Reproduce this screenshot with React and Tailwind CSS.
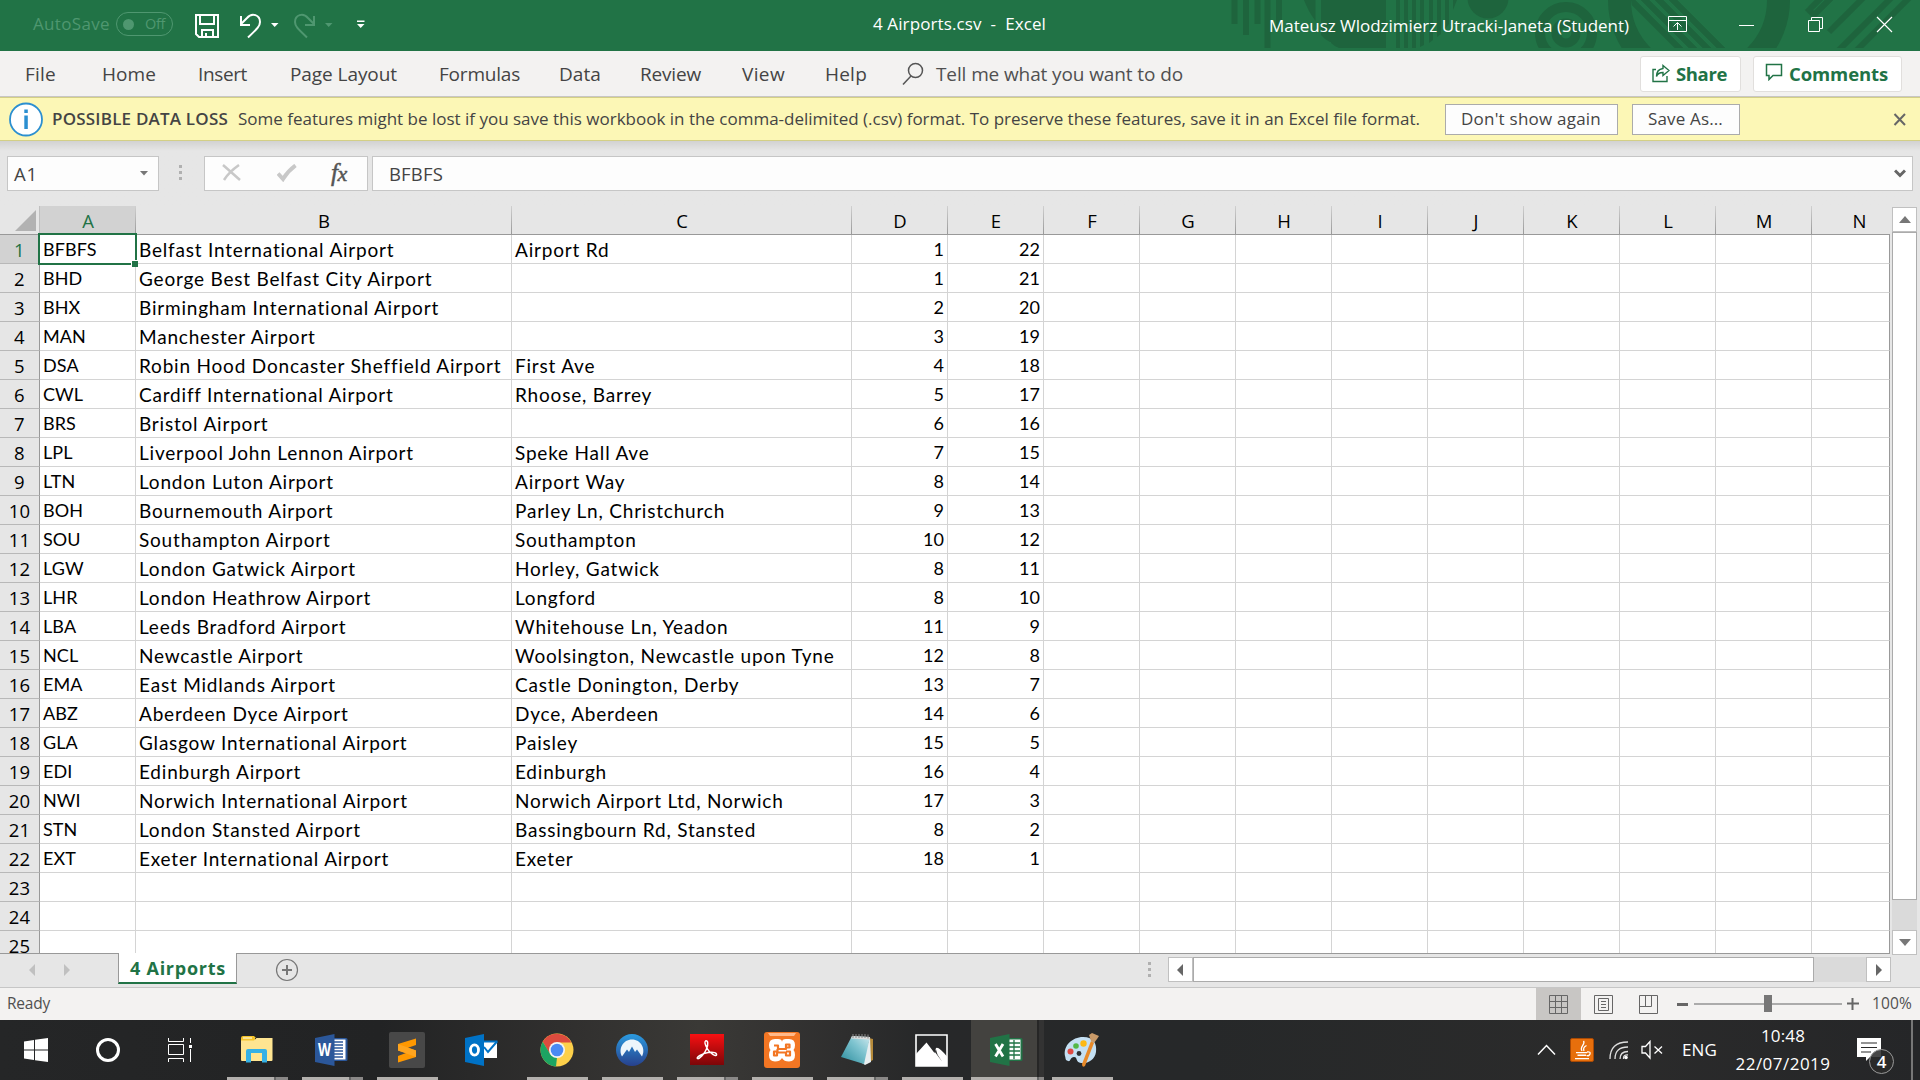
import React, { useLayoutEffect, useRef } from "react";

const UI = "font-['Open_Sans','Noto_Sans',sans-serif]";
const CELL = "font-['Lato','Open_Sans',sans-serif]";

/* Text tracked so that it fills exactly `w` pixels. */
function Fit({ w, className = "", children }) {
  const ref = useRef(null);
  useLayoutEffect(() => {
    const el = ref.current;
    el.style.letterSpacing = "0px";
    const natural = el.getBoundingClientRect().width;
    el.style.letterSpacing = `${(w - natural) / el.textContent.length}px`;
  }, [w]);
  return (
    <span className={`block shrink-0 whitespace-pre ${className}`} style={{ width: w }}>
      <span ref={ref} className="inline-block">{children}</span>
    </span>
  );
}

const ROWS = [
  ["BFBFS", "Belfast International Airport", "Airport Rd", 1, 22],
  ["BHD", "George Best Belfast City Airport", "", 1, 21],
  ["BHX", "Birmingham International Airport", "", 2, 20],
  ["MAN", "Manchester Airport", "", 3, 19],
  ["DSA", "Robin Hood Doncaster Sheffield Airport", "First Ave", 4, 18],
  ["CWL", "Cardiff International Airport", "Rhoose, Barrey", 5, 17],
  ["BRS", "Bristol Airport", "", 6, 16],
  ["LPL", "Liverpool John Lennon Airport", "Speke Hall Ave", 7, 15],
  ["LTN", "London Luton Airport", "Airport Way", 8, 14],
  ["BOH", "Bournemouth Airport", "Parley Ln, Christchurch", 9, 13],
  ["SOU", "Southampton Airport", "Southampton", 10, 12],
  ["LGW", "London Gatwick Airport", "Horley, Gatwick", 8, 11],
  ["LHR", "London Heathrow Airport", "Longford", 8, 10],
  ["LBA", "Leeds Bradford Airport", "Whitehouse Ln, Yeadon", 11, 9],
  ["NCL", "Newcastle Airport", "Woolsington, Newcastle upon Tyne", 12, 8],
  ["EMA", "East Midlands Airport", "Castle Donington, Derby", 13, 7],
  ["ABZ", "Aberdeen Dyce Airport", "Dyce, Aberdeen", 14, 6],
  ["GLA", "Glasgow International Airport", "Paisley", 15, 5],
  ["EDI", "Edinburgh Airport", "Edinburgh", 16, 4],
  ["NWI", "Norwich International Airport", "Norwich Airport Ltd, Norwich", 17, 3],
  ["STN", "London Stansted Airport", "Bassingbourn Rd, Stansted", 8, 2],
  ["EXT", "Exeter International Airport", "Exeter", 18, 1],
  [], [], [],
];

const COLS = "ABCDEFGHIJKLMN".split("");
const GRID = "grid grid-cols-[40px_96px_376px_340px_repeat(10,96px)_78px]";

function cellText(j) {
  if (j === 0) return "pl-[3px] tracking-[0.1px]";
  if (j < 3) return "pl-[3px] text-[19px] tracking-[0.8px]";
  return "pr-[3px] text-right";
}

function TitlePattern() {
  return (
    <svg className="absolute left-[1220px] top-0" width="700" height="48" viewBox="0 0 700 48">
      <defs>
        <clipPath id="ringInner"><path d="M380 0H411A68 68 0 0 0 440 48H560V0Z" /></clipPath>
      </defs>
      <g fill="#1e643d">
        <path d="M11.500 0h6v24h-6zM23 0h6v35h-6zM34.500 0h6v24h-6zM44.500 0h6v48h-6zM56 0h6v28h-6z" />
        <path d="M84 0h11.500v21Q88 11 84 0zM101 0h10v42h-1q-6-3-9-7z" />
        <path d="M111 0h55v48h-47q-5-2-8-5z" />
        <path d="M176 0h4v48h-4zM184 0h4v48h-4zM192 0h4v48h-4zM200 0h4v45l-4 2zM209 0h4v40l-4 3zM217 0h4v34l-4 3zM225 0h4v24l-4 5zM233 0h4l-4 10z" />
        <circle cx="268" cy="-2" r="20.500" />
      </g>
      <g fill="none" stroke="#1e643d">
        <circle cx="346" cy="33" r="26" strokeWidth="10" />
        <circle cx="346" cy="33" r="10" strokeWidth="9" />
        <circle cx="479" cy="0" r="79.500" strokeWidth="23" />
        <g clipPath="url(#ringInner)" strokeWidth="6">
          <path d="M397-14 465 54M411-14 479 54M425-14 493 54M439-14 507 54" />
        </g>
        <path d="M590 9 602-3M587 8 594 15 617-8M609 32 645-4M615 54 673-4M633 54 691-4" strokeWidth="6" />
      </g>
    </svg>
  );
}

function TitleBar() {
  return (
    <header className="relative flex h-[51px] shrink-0 items-start bg-[#217346] text-white">
      <TitlePattern />
      <div className="relative flex w-full items-start">
        <Fit w={77} className="ml-[33px] mt-[12px] text-[17px] leading-[24px] text-[#4f9770]">AutoSave</Fit>
        <div className="ml-[6px] mt-[12px] flex h-[24px] w-[57px] items-center rounded-full border border-[#4f9770] pl-[6px] text-[#4f9770]">
          <span className="h-[11px] w-[11px] rounded-full bg-[#4f9770]" />
          <Fit w={20} className="ml-[11px] text-[14.500px] leading-[20px]">Off</Fit>
        </div>
        <svg className="ml-[21px] mt-[13px]" width="26" height="26" viewBox="0 0 26 26" fill="none" stroke="#fff" strokeWidth="2">
          <path d="M2 2H24V24H5L2 21ZM6 2V11H20V2M8 24V17H19V24M12 20V24" />
        </svg>
        <svg className="ml-[18px] mt-[13px]" width="42" height="26" viewBox="0 0 42 26" fill="none">
          <path d="M3 3V12H12M3 11 9 5C14-1 22 2 22 9C22 13 20 15 10 24.500" stroke="#fff" strokeWidth="2" />
          <path d="M33 10H40.500L36.700 14Z" fill="#fff" />
        </svg>
        <svg className="ml-[12px] mt-[13px]" width="42" height="26" viewBox="0 0 42 26" fill="none">
          <path d="M22 3V12H13M22 11 16 5C11-1 3 2 3 9C3 13 5 15 15 24.500" stroke="#4f9770" strokeWidth="2" />
          <path d="M33 10H40.500L36.700 14Z" fill="#4f9770" />
        </svg>
        <svg className="ml-[22px] mt-[20px]" width="10" height="9" viewBox="0 0 10 9" fill="#fff">
          <path d="M1 .5H8.500V2H1ZM1 4H8.500L4.700 8Z" />
        </svg>
        <Fit w={173} className="ml-[507px] mt-[12px] text-[17px] leading-[24px]">{"4 Airports.csv  -  Excel"}</Fit>
        <Fit w={360} className="ml-[223px] mt-[14px] text-[17px] leading-[24px]">Mateusz Wlodzimierz Utracki-Janeta (Student)</Fit>
        <svg className="ml-[39px] mt-[16px]" width="20" height="17" viewBox="0 0 20 17" fill="none" stroke="#fff">
          <path d="M.5.5H18.500V15.500H.5ZM.5 4.500H18.500M9.500 14V7M5.500 10.500 9.500 6.500 13.500 10.500" />
        </svg>
        <svg className="ml-[51px] mt-[25px]" width="16" height="1"><path d="M0 .5H15" stroke="#fff" /></svg>
        <svg className="ml-[52px] mt-[16px]" width="17" height="17" viewBox="0 0 17 17" fill="none" stroke="#fff">
          <path d="M1.500 4.500H12.500V15.500H1.500ZM4.500 4V1.500H15.500V12.500H13" />
        </svg>
        <svg className="ml-[52px] mt-[16px]" width="17" height="17" viewBox="0 0 17 17" fill="none" stroke="#fff" strokeWidth="1.200">
          <path d="M1 1 16 16M16 1 1 16" />
        </svg>
      </div>
    </header>
  );
}

const MENU = [
  ["File", 31, "ml-[25px]"],
  ["Home", 54, "ml-[46px]"],
  ["Insert", 49, "ml-[42px]"],
  ["Page Layout", 107, "ml-[43px]"],
  ["Formulas", 81, "ml-[42px]"],
  ["Data", 42, "ml-[39px]"],
  ["Review", 61, "ml-[39px]"],
  ["View", 43, "ml-[41px]"],
  ["Help", 42, "ml-[40px]"],
];

function MenuBar() {
  return (
    <nav className="flex h-[46px] shrink-0 items-center border-b border-[#c8c6c4] bg-[#f3f2f1] text-[19px] leading-[26px] text-[#444]">
      {MENU.map(([t, w, m]) => <Fit key={t} w={w} className={m}>{t}</Fit>)}
      <svg className="ml-[35px]" width="22" height="24" viewBox="0 0 22 24" fill="none" stroke="#555" strokeWidth="1.500">
        <circle cx="13.500" cy="8.500" r="7" /><path d="M9 14 1 22.500" />
      </svg>
      <Fit w={247} className="ml-[12px] text-[#505050]">Tell me what you want to do</Fit>
      <div className="ml-auto mr-[18px] flex gap-[12px] font-bold text-[#217346]">
        <button className="flex h-[36px] w-[101px] items-center rounded-[3px] border border-[#e1dfdd] bg-white pl-[11px]">
          <svg width="18" height="19" viewBox="0 0 18 19" fill="none" stroke="#217346" strokeWidth="1.400">
            <path d="M4 5.500H1V17.500H15V12M11 1.500 17 6.500 11 11.500V8.500C8 8.500 5.500 9.500 4.500 12.500C4.500 8 7 5 11 4.500Z" />
          </svg>
          <Fit w={51} className="ml-[6px] text-[18.500px]">Share</Fit>
        </button>
        <button className="flex h-[36px] w-[149px] items-center rounded-[3px] border border-[#e1dfdd] bg-white pl-[11px]">
          <svg className="-mt-[3px]" width="18" height="18" viewBox="0 0 18 18" fill="none" stroke="#217346" strokeWidth="1.500">
            <path d="M1.500 1.500H16.500V12.500H8L4 16.500V12.500H1.500Z" />
          </svg>
          <Fit w={99} className="ml-[6px] text-[18.500px]">Comments</Fit>
        </button>
      </div>
    </nav>
  );
}

function MessageBar() {
  return (
    <div className="flex h-[44px] shrink-0 items-center border-b border-t border-[#d3cf86] bg-[#fcf7b6] text-[17px] leading-[24px] text-[#444]">
      <svg className="ml-[9px]" width="35" height="35" viewBox="0 0 35 35">
        <circle cx="17" cy="17.500" r="16" fill="#fff" stroke="#2b8fd0" strokeWidth="1.800" />
        <path d="M15.300 7.500h3.500v3.500h-3.500zM15.300 13.500h3.500v13.500h-3.500z" fill="#2b8fd0" />
      </svg>
      <Fit w={176} className="ml-[8px] font-semibold">POSSIBLE DATA LOSS</Fit>
      <Fit w={1182} className="ml-[10px]">Some features might be lost if you save this workbook in the comma-delimited (.csv) format. To preserve these features, save it in an Excel file format.</Fit>
      <button className="ml-[25px] flex h-[31px] w-[173px] items-center border border-[#ababab] bg-[#fdfdfd] pl-[15px]">
        <Fit w={140}>Don't show again</Fit>
      </button>
      <button className="ml-[14px] flex h-[31px] w-[108px] items-center border border-[#ababab] bg-[#fdfdfd] pl-[15px]">
        <Fit w={75}>Save As...</Fit>
      </button>
      <svg className="ml-auto mr-[13px]" width="14" height="13" viewBox="0 0 14 13"><path d="M1.500 1 12 12M12 1 1.500 12" stroke="#666" strokeWidth="2" /></svg>
    </div>
  );
}

function FormulaBar() {
  return (
    <div className="flex h-[65px] shrink-0 items-start bg-gradient-to-b from-[#d2d2d2] to-[#e6e6e6] to-[10px] pt-[15px] text-[18.500px] leading-[33px] text-[#444]">
      <div className="ml-[7px] flex h-[35px] w-[152px] items-center justify-between border border-[#c6c6c6] bg-[#fdfdfd] pl-[6px] pr-[10px]">
        <Fit w={24}>A1</Fit>
        <svg width="8" height="5"><path d="M0 0H8L4 4.500Z" fill="#777" /></svg>
      </div>
      <svg className="ml-[20px] mt-[9px]" width="3" height="17" fill="#b0b0b0"><path d="M0 0h3v3H0zM0 6h3v3H0zM0 12h3v3H0z" /></svg>
      <div className="ml-[22px] flex h-[35px] w-[164px] items-center border border-[#c6c6c6] bg-[#fdfdfd]">
        <svg className="ml-[17px] -mt-[2px]" width="19" height="17" viewBox="0 0 19 17"><path d="M1 1Q9 8 18 16M17 1Q7 8 2 16" fill="none" stroke="#c8c8c8" strokeWidth="2.500" /></svg>
        <svg className="ml-[36px] -mt-[1px]" width="20" height="18" viewBox="0 0 20 18"><path d="M1 9.500 6 15Q11 7 18.500 1.500" fill="none" stroke="#c8c8c8" strokeWidth="4" /></svg>
        <span className="ml-[34px] font-['Liberation_Serif',serif] text-[25px] italic leading-[30px] tracking-[-0.5px] text-[#555] [-webkit-text-stroke:0.500px_#555]">f<span className="text-[22px]">x</span></span>
      </div>
      <div className="ml-[4px] flex h-[35px] w-[1541px] items-center justify-between border border-[#c6c6c6] bg-[#fdfdfd] pl-[16px] pr-[6px]">
        <Fit w={54}>BFBFS</Fit>
        <svg width="12" height="9" viewBox="0 0 12 9"><path d="M1 1.500 6 6.500 11 1.500" fill="none" stroke="#666" strokeWidth="3" /></svg>
      </div>
    </div>
  );
}

function Sheet() {
  return (
    <div className="flex h-[748px] shrink-0 bg-[#e6e6e6]">
      <div className="h-[748px] w-[1890px] overflow-hidden border-b border-[#999]">
        <div className={`${GRID} h-[29px] border-b border-[#999] text-[18.500px] leading-[30px] text-black`}>
          <div className="flex items-end justify-end border-r border-[#c0c0c0] pb-[3px] pr-[3px]">
            <svg width="21" height="21"><path d="M21 0V21H0Z" fill="#b2b2b2" /></svg>
          </div>
          {COLS.map((c) => (
            <div key={c} className={`relative h-[28px] text-center ${c === "A" ? "bg-[#d2d2d2] text-[#217346]" : ""} ${c === "N" ? "pl-[17px]" : ""}`}>
              {c}
              {c !== "N" && <span className="absolute right-0 top-0 h-full w-px bg-gradient-to-b from-[#d0d0d0] to-[#999]" />}
            </div>
          ))}
        </div>
        <div className="relative">
          {ROWS.map((r, i) => (
            <div key={i} className={`${GRID} h-[29px] bg-white text-[18px] leading-[29px] text-black ${CELL}`}>
              <div className={`${UI} h-[29px] border-b border-r border-b-[#b8b8b8] border-r-[#999] text-center text-[18.500px] leading-[29px] tracking-[0.2px] ${i === 0 ? "bg-[#d2d2d2] text-[#217346]" : "bg-[#e6e6e6]"}`}>
                {i + 1}
              </div>
              {COLS.map((c, j) => (
                <div
                  key={c}
                  className={`h-[29px] overflow-hidden whitespace-nowrap border-b border-[#d4d4d4] ${c === "N" ? "border-r border-r-[#999]" : "border-r"} ${cellText(j)}`}
                >
                  {j < 5 ? r[j] : null}
                </div>
              ))}
            </div>
          ))}
          <div className="absolute left-[38px] top-[-2px] h-[32px] w-[99px] border-2 border-[#217346]">
            <span className="absolute bottom-[-4px] right-[-3px] h-[7px] w-[7px] border-l border-t border-white bg-[#217346]" />
          </div>
        </div>
      </div>
      <div className="relative ml-[2px] mt-px flex h-[748px] w-[25px] flex-col bg-[#dadada]">
        <div className="flex h-[25px] items-center justify-center border border-[#c0c0c0] bg-white"><svg width="12" height="7"><path d="M6 0 12 7H0Z" fill="#777" /></svg></div>
        <div className="h-[668px] border border-[#ababab] bg-white" />
        <div className="mt-auto flex h-[25px] items-center justify-center border border-[#c0c0c0] bg-white"><svg width="12" height="7"><path d="M0 0H12L6 7Z" fill="#777" /></svg></div>
      </div>
    </div>
  );
}

function TabBar() {
  return (
    <div className="flex h-[34px] shrink-0 items-start border-b border-[#c6c6c6] bg-[#e6e6e6]">
      <svg className="ml-[29px] mt-[10px]" width="42" height="12" fill="#c0c0c0"><path d="M6 0V12L0 6ZM35 0V12L41 6Z" /></svg>
      <div className="relative z-10 -mt-px ml-[47px] h-[31px] w-[119px] border-x border-b-2 border-x-[#999] border-b-[#217346] bg-white pl-[11px] text-[18px] font-bold leading-[30px] text-[#217346]">
        <Fit w={96}>4 Airports</Fit>
      </div>
      <svg className="ml-[38px] mt-[4px]" width="24" height="24" viewBox="0 0 24 24" fill="none" stroke="#777">
        <circle cx="12" cy="12" r="10.500" strokeWidth="1.200" /><path d="M12 7V17M7 12H17" strokeWidth="2" />
      </svg>
      <svg className="ml-[849px] mt-[8px]" width="3" height="16" fill="#b0b0b0"><path d="M0 0h3v3H0zM0 6h3v3H0zM0 12h3v3H0z" /></svg>
      <div className="ml-[17px] mt-[3px] flex h-[25px] w-[723px] justify-between bg-[#dadada]">
        <div className="flex w-[25px] items-center justify-center border border-[#c0c0c0] bg-white pr-[2px]"><svg width="6" height="12"><path d="M6 0V12L0 6Z" fill="#666" /></svg></div>
        <div className="w-[621px] border border-[#ababab] bg-white" />
        <div className="ml-auto flex w-[25px] items-center justify-center border border-[#c0c0c0] bg-white"><svg width="6" height="12"><path d="M0 0V12L6 6Z" fill="#666" /></svg></div>
      </div>
    </div>
  );
}

function StatusBar() {
  return (
    <div className="flex h-[32px] shrink-0 items-center bg-[#f3f2f1] text-[15.500px] leading-[22px] text-[#505050]">
      <Fit w={43} className="-mt-[2px] ml-[7px]">Ready</Fit>
      <div className="ml-auto flex h-full w-[45px] items-center justify-center bg-[#c8c6c4]">
        <svg width="19" height="19" fill="none" stroke="#666"><path d="M.5.5H18.500V18.500H.5ZM6.500 0V19M12.500 0V19M0 6.500H19M0 12.500H19" /></svg>
      </div>
      <svg className="ml-[13px]" width="19" height="19" fill="none" stroke="#666"><path d="M.5.5H18.500V18.500H.5ZM4.500 3.500H14.500V15.500H4.500ZM7 6.500H12M7 9.500H12M7 12.500H12" /></svg>
      <svg className="ml-[26px]" width="19" height="19" fill="none" stroke="#666"><path d="M.5.5H18.500V18.500H.5ZM.5 11.500H12.500V.5M6.500 0V11" /></svg>
      <svg className="ml-[19px]" width="12" height="3"><path d="M0 0H11V3H0Z" fill="#666" /></svg>
      <div className="relative ml-[5px] h-[2px] w-[148px] bg-[#ababab]">
        <span className="absolute left-[70px] top-[-8px] h-[17px] w-[8px] bg-[#777]" />
      </div>
      <svg className="ml-[5px]" width="12" height="12"><path d="M5.500 0V12M0 5.500H12" stroke="#666" strokeWidth="2" /></svg>
      <Fit w={40} className="-mt-[2px] ml-[13px] mr-[8px]">100%</Fit>
    </div>
  );
}

const ICONS = {
  explorer: (
    <svg width="34" height="30" viewBox="0 0 34 30">
      <path d="M1 3q0-2 2-2h11l2 2h-1v3H1z" fill="#f7c52b" /><path d="M3 2.500h9v1H3z" fill="#fff" />
      <path d="M1 5.500h13l2.500-2.500h16v22q0 1-1 1H2q-1 0-1-1z" fill="#ffe591" />
      <path d="M6 27.500V16q0-2 2-2h17q2 0 2 2v11.500h-5V18H11v9.500z" fill="#35b1e6" />
    </svg>
  ),
  word: (
    <svg width="33" height="32" viewBox="0 0 33 32">
      <path d="M16 4h15q1.500 0 1.500 1.500v20q0 1.500-1.500 1.500H16z" fill="#2b579a" /><path d="M18 5.500h12.500v20H18z" fill="#fff" />
      <path d="M19 8h9M19 11h9M19 14h9M19 17h9M19 20h9M19 23h9" stroke="#2b579a" strokeWidth="1.500" />
      <path d="M0 4 19.500 0V32L0 28z" fill="#2b579a" />
      <text x="3" y="22" fontSize="17" fontWeight="700" fill="#fff" fontFamily="Open Sans" textLength="13" lengthAdjust="spacingAndGlyphs">W</text>
    </svg>
  ),
  sublime: (
    <svg width="36" height="36" viewBox="0 0 36 36">
      <rect width="36" height="36" rx="2" fill="#484848" />
      <path d="M9 12 27 6.500V13L19 15.800 27 18.500V25L9 30.500V24L17 21 9 18.500z" fill="#ff9800" /><path d="M9 18.500V12l18 6.500V25z" fill="#ffa51f" />
    </svg>
  ),
  outlook: (
    <svg width="33" height="32" viewBox="0 0 33 32">
      <path d="M18 8h14v16H18z" fill="#fff" /><path d="M19 13 23 18 32 7.500" fill="none" stroke="#0072c6" strokeWidth="2" /><path d="M18 6.500h14.500v2H18z" fill="#0072c6" />
      <path d="M0 4 19 0V32L0 28z" fill="#0072c6" /><ellipse cx="9.500" cy="16" rx="4" ry="5.200" fill="none" stroke="#fff" strokeWidth="2.800" />
    </svg>
  ),
  chrome: (
    <svg width="34" height="34" viewBox="0 0 34 34">
      <circle cx="17" cy="17" r="16.500" fill="#fdd04a" />
      <path d="M2.700 8.700A16.500 16.500 0 0 1 31.300 9.500H17L10 21z" fill="#dd4b3e" />
      <path d="M2.700 8.700 10.500 21.500 17 24.500 16 33.500A16.500 16.500 0 0 1 2.700 8.700z" fill="#1da462" />
      <circle cx="17" cy="17" r="8" fill="#f4f4f4" /><circle cx="17" cy="17" r="6.300" fill="#4a8af4" />
    </svg>
  ),
  nord: (
    <svg width="32" height="32" viewBox="0 0 32 32">
      <defs><linearGradient id="nordBg" x2="0" y2="1"><stop stopColor="#2b9be0" /><stop offset="1" stopColor="#27408c" /></linearGradient></defs>
      <circle cx="16" cy="16" r="16" fill="url(#nordBg)" />
      <path d="M6 22.500C2 15 7 5.500 16 5.500S30 15 26 22.500L21 15.500 19 18 16 12.500 13 18 11 15.500z" fill="#edf5fb" />
    </svg>
  ),
  acrobat: (
    <svg width="34" height="34" viewBox="0 0 34 34">
      <defs><linearGradient id="pdfBg" x2="0" y2="1"><stop stopColor="#f81012" /><stop offset="1" stopColor="#7c0608" /></linearGradient></defs>
      <rect y="1" width="34" height="31" fill="url(#pdfBg)" />
      <path d="M15.500 8C18 7 18.500 11 16.500 16S9 26.500 7.500 25.500 12 20.500 18 19.500 27 20 26.500 22 20 20.500 17.500 16 14 9 15.500 8z" fill="none" stroke="#fff" strokeWidth="1.500" />
    </svg>
  ),
  xampp: (
    <svg width="36" height="36" viewBox="0 0 36 36">
      <rect width="36" height="36" rx="3" fill="#f37623" /><path d="M4 1h28l-2 3H6z" fill="#ffb98a" />
      <path d="M5 13Q5 7 11 7H14Q18 7 18 10Q18 7 22 7H25Q31 7 31 13Q31 16.500 29.500 18Q31 19.500 31 23Q31 29.500 25 29.500Q20 29.500 18 26Q16 29.500 11 29.500Q5 29.500 5 23Q5 19.500 6.500 18Q5 16.500 5 13z" fill="#fff" />
      <path d="M10 13.500H14V17H22V12.500H25.500V15.500H23M13.500 17V19.500H10V23.500H13V20.500H22V23.500H26V19.500H22" fill="none" stroke="#f37623" strokeWidth="2.200" strokeLinejoin="round" />
    </svg>
  ),
  notepad: (
    <svg width="34" height="34" viewBox="0 0 34 34">
      <defs><linearGradient id="noteBg" x1="0" x2="1" y1="1" y2="0"><stop stopColor="#2a8c9c" /><stop offset=".6" stopColor="#7fc4d0" /><stop offset="1" stopColor="#cfe9ee" /></linearGradient></defs>
      <path d="M29 5 33 6V27L29 29z" fill="#b58a3a" /><path d="M30 4 31 29 25 32 22 30z" fill="#e8eef0" />
      <path d="M12 3 30 4 24 31 1 24z" fill="url(#noteBg)" /><path d="M12 3 30 4 29.500 6.500 11 5.500z" fill="#dcdcdc" />
      <path d="M13 1V5M16 1V5M19 1V5M22 1V5M25 1V5M28 1.500V5.500" stroke="#888" />
    </svg>
  ),
  photos: (
    <svg width="33" height="33" viewBox="0 0 33 33">
      <path d="M1 1H32V32H1z" fill="none" stroke="#fff" strokeWidth="1.600" />
      <path d="M1 20 11.500 8.500 19.500 19 21 14Q23.500 12 32 22.500V32H1z" fill="#fff" /><path d="M19.500 17.500 21 15.500 22.500 20.500 27 27.500z" fill="#333" />
    </svg>
  ),
  excel: (
    <svg width="33" height="32" viewBox="0 0 33 32">
      <path d="M16 4h15q1.500 0 1.500 1.500v20q0 1.500-1.500 1.500H16z" fill="#217346" /><path d="M18 5.500h12.500v20H18z" fill="#fff" />
      <path d="M18 9h12M18 13h12M18 17h12M18 21h12M24 6v19" stroke="#217346" strokeWidth="1.300" />
      <path d="M0 4 19.500 0V32L0 28z" fill="#217346" />
      <path d="M5.500 10 13 22.500M13 10 5.500 22.500" stroke="#fff" strokeWidth="2.800" />
    </svg>
  ),
  paint: (
    <svg width="38" height="36" viewBox="0 0 38 36">
      <path d="M2 24C0 14 9 5 20 5S34 12 33 20 24 32 18 31 15 25 11 25 8 30 5 29 3 27 2 24z" fill="#c4e0f3" />
      <circle cx="7.500" cy="19.500" r="3" fill="#e04a43" /><circle cx="13" cy="14" r="2.800" fill="#53b848" /><circle cx="20.500" cy="11.500" r="3.200" fill="#fdb913" /><circle cx="16" cy="21.500" r="2.400" fill="#2d3033" />
      <path d="M28 9 31 11 22 34Q19 36 19 32z" fill="#e78a2a" /><path d="M28 9 26 3 29 1 36 4 34 7 31 11z" fill="#c99a68" />
    </svg>
  ),
};

const APPS = [
  ["explorer", "stack"], ["word", "stack"], ["sublime", "one"], ["outlook", "none"], ["chrome", "one"], ["nord", "one"],
  ["acrobat", "stack"], ["xampp", "one"], ["notepad", "stack"], ["photos", "one"], ["excel", "active"], ["paint", "one"],
];

function Taskbar() {
  return (
    <footer className="flex h-[60px] shrink-0 bg-[linear-gradient(90deg,#252627_0,#222324_380px,#302f2e_560px,#3a3936_700px,#343332_780px,#272829_920px,#262829_1200px,#2b2b2b_1600px,#252628_1920px)] text-[17px] text-white">
      <div className="flex w-[72px] items-center justify-center">
        <svg width="24" height="24" viewBox="0 0 24 24" fill="#fff"><path d="M0 3.400 10 2V11.500H0ZM11 1.800 24 0V11.500H11ZM0 12.500H10V22L0 20.600ZM11 12.500H24V24L11 22.200Z" /></svg>
      </div>
      <div className="flex w-[72px] items-center justify-center"><span className="h-[24px] w-[24px] rounded-full border-[3px] border-white" /></div>
      <div className="flex w-[76px] items-center pl-[24px]">
        <svg width="25" height="24" fill="none" stroke="#fff"><path d="M.5 0V3.500H15.500V0M.5 6.500H15.500V16.500H.5ZM.5 24V20.500H15.500V24M22.500 0V5M22.500 11V24" /><path d="M21 7h3v3h-3z" fill="#fff" stroke="none" /></svg>
      </div>
      {APPS.map(([name, kind]) => (
        <div key={name} className="relative flex w-[75px] items-center justify-center pr-[2px]">
          {kind === "active" && <span className="absolute left-px top-0 flex h-full w-[73px] bg-[#43423f]"><span className="ml-auto h-full w-[7px] border-l-2 border-[#262626] bg-[#333]" /></span>}
          <span className="relative">{ICONS[name]}</span>
          {kind !== "none" && (
            <span className={`absolute bottom-0 flex h-[3px] bg-[#b3b0ad] ${kind === "active" ? "left-px w-[73px]" : name === "paint" ? "left-[7px] w-[61px]" : "left-[7px] w-[61px]"}`}>
              {kind === "stack" && <span className="ml-auto w-[14px] border-l-2 border-[#666] bg-[#8a8887]" />}
              {kind === "active" && <span className="ml-auto w-[7px] border-l-2 border-[#666] bg-[#8a8887]" />}
            </span>
          )}
        </div>
      ))}
      <div className="ml-auto flex items-center">
        <svg width="19" height="12" fill="none" stroke="#fff" strokeWidth="1.500"><path d="M1 10.500 9.500 1.500 18 10.500" /></svg>
        <svg className="ml-[14px]" width="24" height="24" viewBox="0 0 24 24">
          <rect x=".5" y=".5" width="23" height="23" rx="1.500" fill="#e76f0c" stroke="#a84a05" />
          <path d="M13.500 3C16 6.500 9 8.500 12 13M16.500 7.500Q12.500 9.500 14 13" fill="none" stroke="#fff" strokeWidth="1.300" />
          <path d="M6 14H17V15.200H6zM7.500 16.500H16V18H7.500zM5 20H19V21.200H5z" fill="#fff" /><path d="M17 14Q21 13.500 20 16T16.500 17.500" fill="none" stroke="#fff" strokeWidth="1.300" />
        </svg>
        <svg className="ml-[15px]" width="21" height="20" viewBox="0 0 21 20" fill="none" stroke="#ddd" strokeWidth="1.300">
          <path d="M1 19Q1 2 19 2M6 19Q6 7 19 7M11 19Q11 11.500 19 11.500" /><circle cx="17" cy="17.500" r="1.800" fill="#fff" stroke="none" /><path d="M14.500 19Q14 14.500 19 15" />
        </svg>
        <svg className="ml-[11px]" width="23" height="20" viewBox="0 0 23 20" fill="none" stroke="#fff" strokeWidth="1.300"><path d="M1 6.500H4.500L9 1.500V18L4.500 13H1ZM13.500 6.500 21 13.500M21 6.500 13.500 13.500" /></svg>
        <Fit w={35} className="ml-[18px] leading-[24px]">ENG</Fit>
        <div className="ml-[18px] flex w-[96px] flex-col items-center leading-[28px]">
          <Fit w={44}>10:48</Fit>
          <Fit w={95}>22/07/2019</Fit>
        </div>
        <div className="relative ml-[26px] h-[40px] w-[37px] pt-[6px]">
          <svg width="25" height="26" viewBox="0 0 25 26"><path d="M0 2H24V21H13L9 25V21H0Z" fill="#fff" /><path d="M4 7H20M4 11.500H20M4 16H14" stroke="#2a2a2a" strokeWidth="1.200" /></svg>
          <span className="absolute left-[12px] top-[19px] flex h-[25px] w-[25px] items-center justify-center rounded-full border border-[#999] bg-[#2b2b2bdd] text-[17px] font-semibold">4</span>
        </div>
        <span className="ml-[17px] mr-[7px] h-[60px] w-[2px] bg-[#777]" />
      </div>
    </footer>
  );
}

export default function App() {
  return (
    <main className={`flex h-[1080px] w-[1920px] flex-col overflow-hidden bg-[#e6e6e6] ${UI}`}>
      <TitleBar />
      <MenuBar />
      <MessageBar />
      <FormulaBar />
      <Sheet />
      <TabBar />
      <StatusBar />
      <Taskbar />
    </main>
  );
}
